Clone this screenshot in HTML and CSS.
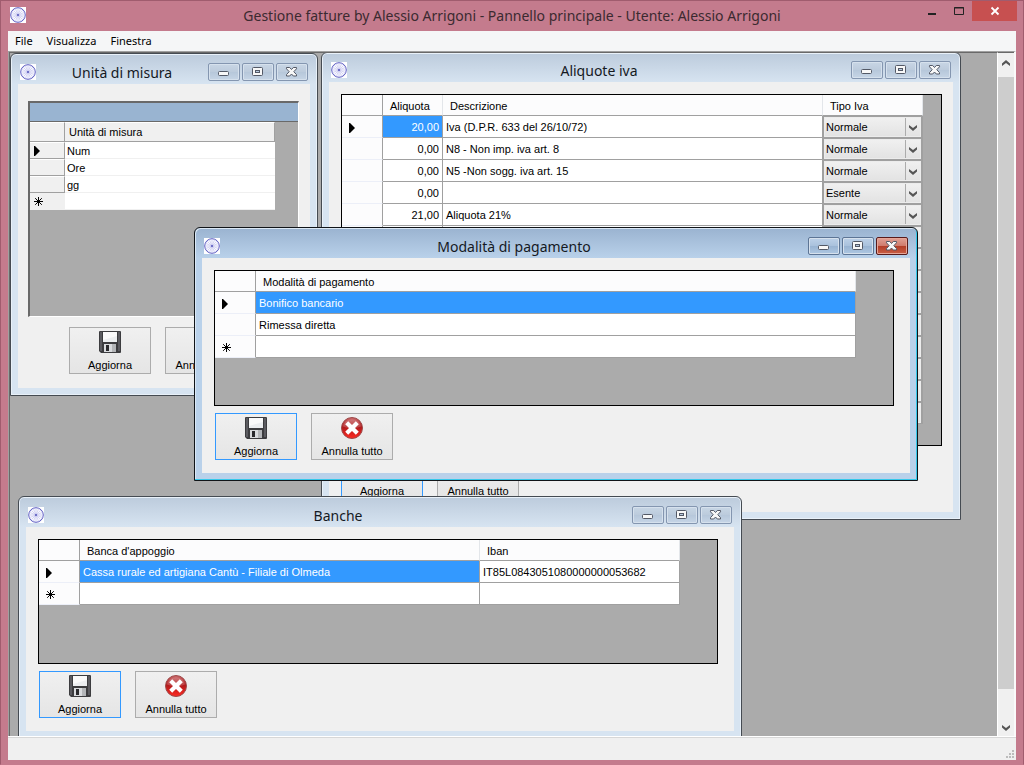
FILE: index.html
```html
<!DOCTYPE html>
<html lang="it">
<head>
<meta charset="utf-8">
<title>Gestione fatture by Alessio Arrigoni</title>
<link rel="stylesheet" href="styles.css">
</head>
<body>
<svg class="symbols" aria-hidden="true">
  <symbol id="wheel" viewBox="0 0 16 16">
    <rect width="16" height="16" fill="#fff"/>
    <circle cx="8" cy="8" r="7.300" fill="#f8f8ff" stroke="#5c5cc2" stroke-width="1"/>
    <path d="M8 1v14M1 8h14M3.100 3.100l9.800 9.800M12.900 3.100l-9.800 9.800M5.500 2l5 12M10.500 2l-5 12M2 5.500l12 5M14 5.500l-12 5" stroke="#b4b4e6" stroke-width=".5"/>
    <circle cx="8" cy="8" r="2" fill="#cfcff2"/>
    <circle cx="8" cy="8" r="1" fill="#5050b8"/>
  </symbol>
  <symbol id="minimize" viewBox="0 0 32 18">
    <rect x="10.500" y="8.500" width="10" height="4" rx="1" fill="#f8f8f8" stroke="#535966"/>
  </symbol>
  <symbol id="maximize" viewBox="0 0 32 18">
    <rect x="10.500" y="4.500" width="10" height="8" rx="1" fill="#f8f8f8" stroke="#535966"/>
    <rect x="13.500" y="7.500" width="4" height="2" fill="#b9cbe0" stroke="#535966"/>
  </symbol>
  <symbol id="close" viewBox="0 0 32 18">
    <path d="M10.500 4.500h3.200l1.800 2 1.800-2h3.200v1.300L17.800 8.700l2.700 2.900v1.400h-3.200l-1.800-2-1.800 2h-3.200v-1.400l2.700-2.900-2.700-2.900z" fill="#f8f8f8" stroke="#535966"/>
  </symbol>
  <symbol id="floppy" viewBox="0 0 22 22">
    <path d="M0 1q0-1 1-1h20q1 0 1 1v20q0 1-1 1H2l-2-2z" fill="#3c3c3f"/>
    <path d="M1 1h2v19H1zM19 1h2v19h-2z" fill="#5b5b60"/>
    <rect x="4" y="1" width="14" height="10" fill="#eceef0"/>
    <path d="M4 1h14v4L4 9z" fill="#fafafa"/>
    <rect x="5" y="13" width="12" height="8" fill="#d9dbde"/>
    <rect x="7" y="14" width="3" height="6" fill="#29292c"/>
    <path d="M13 13h4v8h-4z" fill="#b4b6b9"/>
  </symbol>
  <symbol id="cancel" viewBox="0 0 22 22">
    <circle cx="11" cy="11" r="10.500" fill="url(#red)" stroke="#9c4a4a"/>
    <path d="M2 9.500a9.200 9.200 0 0 1 18 0q-9 4-18 0z" fill="#fff" opacity=".18"/>
    <path d="M7.200 4.200L11 8l3.800-3.800 3 3L14 11l3.800 3.800-3 3L11 14l-3.800 3.800-3-3L8 11 4.200 7.200z" fill="#fff"/>
  </symbol>
  <symbol id="arrow" viewBox="0 0 6 10"><path d="M0 0h1l5 5-5 5H0z"/></symbol>
  <symbol id="star" viewBox="0 0 9 9">
    <path d="M4.500 0v9M0 4.500h9M1.200 1.200l6.600 6.600M7.800 1.200L1.200 7.800" stroke="#000" fill="none"/>
  </symbol>
  <symbol id="chevron" viewBox="0 0 8 6"><path d="M0 0l4 3L8 0v2.500L4 6 0 2.500z" fill="#555"/></symbol>
  <linearGradient id="red" x1="0" y1="0" x2="0" y2="1">
    <stop offset="0" stop-color="#c8686a"/><stop offset=".45" stop-color="#b01a1c"/><stop offset="1" stop-color="#ff2a22"/>
  </linearGradient>
</svg>

<div class="app">
  <header class="app-title">
    <svg class="app-icon"><use href="#wheel"/></svg>
    <h1 class="app-name">Gestione fatture by Alessio Arrigoni - Pannello principale - Utente: Alessio Arrigoni</h1>
    <div class="app-controls">
      <button class="app-btn" aria-label="Riduci a icona"><svg viewBox="0 0 10 10"><path d="M1 7h8v2H1z" fill="#222"/></svg></button>
      <button class="app-btn" aria-label="Ingrandisci"><svg viewBox="0 0 10 10"><path d="M.5 1.500h9v7h-9zM0 2h10" fill="none" stroke="#222"/></svg></button>
      <button class="app-btn app-close" aria-label="Chiudi"><svg viewBox="0 0 10 10"><path d="M1.500 1.500l7 7M8.500 1.500l-7 7" stroke="#fff" stroke-width="1.800"/></svg></button>
    </div>
  </header>

  <div class="app-body">
    <nav class="menu">
      <button class="menu-item">File</button>
      <button class="menu-item">Visualizza</button>
      <button class="menu-item">Finestra</button>
    </nav>

    <div class="workspace">
      <main class="desktop">

        <section class="window win-units">
          <header class="titlebar">
            <svg class="win-icon"><use href="#wheel"/></svg>
            <h2 class="win-name">Unità di misura</h2>
            <button class="win-btn" aria-label="Riduci a icona"><svg><use href="#minimize"/></svg></button>
            <button class="win-btn" aria-label="Ingrandisci"><svg><use href="#maximize"/></svg></button>
            <button class="win-btn" aria-label="Chiudi"><svg><use href="#close"/></svg></button>
          </header>
          <div class="client">
            <div class="classic">
              <div class="classic-caption"></div>
              <table class="classic-table">
                <colgroup><col class="c-mark-classic"><col class="c-unit"></colgroup>
                <thead><tr><th></th><th>Unità di misura</th></tr></thead>
                <tbody>
                  <tr><th><svg class="mark-arrow"><use href="#arrow"/></svg></th><td>Num</td></tr>
                  <tr><th></th><td>Ore</td></tr>
                  <tr><th></th><td>gg</td></tr>
                  <tr><th class="flat"><svg class="mark-star"><use href="#star"/></svg></th><td></td></tr>
                </tbody>
              </table>
            </div>
            <div class="actions actions-inset">
              <button class="action"><svg><use href="#floppy"/></svg>Aggiorna</button>
              <button class="action"><svg><use href="#cancel"/></svg>Annulla tutto</button>
            </div>
          </div>
        </section>

        <section class="window win-vat">
          <header class="titlebar">
            <svg class="win-icon"><use href="#wheel"/></svg>
            <h2 class="win-name">Aliquote iva</h2>
            <button class="win-btn" aria-label="Riduci a icona"><svg><use href="#minimize"/></svg></button>
            <button class="win-btn" aria-label="Ingrandisci"><svg><use href="#maximize"/></svg></button>
            <button class="win-btn" aria-label="Chiudi"><svg><use href="#close"/></svg></button>
          </header>
          <div class="client">
            <div class="grid">
              <table class="grid-table">
                <colgroup><col class="c-mark"><col class="c-rate"><col class="c-desc"><col class="c-type"></colgroup>
                <thead><tr><th></th><th>Aliquota</th><th>Descrizione</th><th>Tipo Iva</th></tr></thead>
                <tbody>
                  <tr><th><svg class="mark-arrow"><use href="#arrow"/></svg></th><td class="num selected">20,00</td><td>Iva (D.P.R. 633 del 26/10/72)</td><td class="combo"><select aria-label="Tipo Iva"><option>Normale</option></select><svg><use href="#chevron"/></svg></td></tr>
                  <tr><th></th><td class="num">0,00</td><td>N8 - Non imp. iva art. 8</td><td class="combo"><select aria-label="Tipo Iva"><option>Normale</option></select><svg><use href="#chevron"/></svg></td></tr>
                  <tr><th></th><td class="num">0,00</td><td>N5 -Non sogg. iva art. 15</td><td class="combo"><select aria-label="Tipo Iva"><option>Normale</option></select><svg><use href="#chevron"/></svg></td></tr>
                  <tr><th></th><td class="num">0,00</td><td></td><td class="combo"><select aria-label="Tipo Iva"><option>Esente</option></select><svg><use href="#chevron"/></svg></td></tr>
                  <tr><th></th><td class="num">21,00</td><td>Aliquota 21%</td><td class="combo"><select aria-label="Tipo Iva"><option>Normale</option></select><svg><use href="#chevron"/></svg></td></tr>
                  <tr><th></th><td></td><td></td><td class="combo"><select aria-label="Tipo Iva"></select></td></tr>
                  <tr><th></th><td></td><td></td><td class="combo"><select aria-label="Tipo Iva"></select></td></tr>
                  <tr><th></th><td></td><td></td><td class="combo"><select aria-label="Tipo Iva"></select></td></tr>
                  <tr><th></th><td></td><td></td><td class="combo"><select aria-label="Tipo Iva"></select></td></tr>
                  <tr><th></th><td></td><td></td><td class="combo"><select aria-label="Tipo Iva"></select></td></tr>
                  <tr><th></th><td></td><td></td><td class="combo"><select aria-label="Tipo Iva"></select></td></tr>
                  <tr><th></th><td></td><td></td><td class="combo"><select aria-label="Tipo Iva"></select></td></tr>
                  <tr><th></th><td></td><td></td><td class="combo"><select aria-label="Tipo Iva"></select></td></tr>
                  <tr><th></th><td></td><td></td><td class="combo"><select aria-label="Tipo Iva"></select></td></tr>
                </tbody>
              </table>
            </div>
            <div class="actions">
              <button class="action default"><svg><use href="#floppy"/></svg>Aggiorna</button>
              <button class="action"><svg><use href="#cancel"/></svg>Annulla tutto</button>
            </div>
          </div>
        </section>

        <section class="window active win-payment">
          <header class="titlebar">
            <svg class="win-icon"><use href="#wheel"/></svg>
            <h2 class="win-name">Modalità di pagamento</h2>
            <button class="win-btn" aria-label="Riduci a icona"><svg><use href="#minimize"/></svg></button>
            <button class="win-btn" aria-label="Ingrandisci"><svg><use href="#maximize"/></svg></button>
            <button class="win-btn win-close" aria-label="Chiudi"><svg><use href="#close"/></svg></button>
          </header>
          <div class="client">
            <div class="grid">
              <table class="grid-table">
                <colgroup><col class="c-mark"><col class="c-payment"></colgroup>
                <thead><tr><th></th><th>Modalità di pagamento</th></tr></thead>
                <tbody>
                  <tr><th><svg class="mark-arrow"><use href="#arrow"/></svg></th><td class="selected">Bonifico bancario</td></tr>
                  <tr><th></th><td>Rimessa diretta</td></tr>
                  <tr><th><svg class="mark-star"><use href="#star"/></svg></th><td></td></tr>
                </tbody>
              </table>
            </div>
            <div class="actions">
              <button class="action default"><svg><use href="#floppy"/></svg>Aggiorna</button>
              <button class="action"><svg><use href="#cancel"/></svg>Annulla tutto</button>
            </div>
          </div>
        </section>

        <section class="window win-banks">
          <header class="titlebar">
            <svg class="win-icon"><use href="#wheel"/></svg>
            <h2 class="win-name">Banche</h2>
            <button class="win-btn" aria-label="Riduci a icona"><svg><use href="#minimize"/></svg></button>
            <button class="win-btn" aria-label="Ingrandisci"><svg><use href="#maximize"/></svg></button>
            <button class="win-btn" aria-label="Chiudi"><svg><use href="#close"/></svg></button>
          </header>
          <div class="client">
            <div class="grid">
              <table class="grid-table">
                <colgroup><col class="c-mark"><col class="c-bank"><col class="c-iban"></colgroup>
                <thead><tr><th></th><th>Banca d'appoggio</th><th>Iban</th></tr></thead>
                <tbody>
                  <tr><th><svg class="mark-arrow"><use href="#arrow"/></svg></th><td class="selected">Cassa rurale ed artigiana Cantù - Filiale di Olmeda</td><td>IT85L0843051080000000053682</td></tr>
                  <tr><th><svg class="mark-star"><use href="#star"/></svg></th><td></td><td></td></tr>
                </tbody>
              </table>
            </div>
            <div class="actions">
              <button class="action default"><svg><use href="#floppy"/></svg>Aggiorna</button>
              <button class="action"><svg><use href="#cancel"/></svg>Annulla tutto</button>
            </div>
          </div>
        </section>

      </main>
      <div class="scrollbar">
        <button class="scroll-btn" aria-label="Scorri su"><svg class="up"><use href="#chevron"/></svg></button>
        <div class="scroll-thumb"></div>
        <button class="scroll-btn scroll-down" aria-label="Scorri giù"><svg><use href="#chevron"/></svg></button>
      </div>
    </div>

    <footer class="status">
      <svg class="grip" viewBox="0 0 8 8"><path d="M6 0h2v2H6zM3 3h2v2H3zM6 3h2v2H6zM0 6h2v2H0zM3 6h2v2H3zM6 6h2v2H6z" fill="#bcbcbc"/></svg>
    </footer>
  </div>
</div>
</body>
</html>
```
FILE: styles.css
```css
* {
  box-sizing: border-box;
}

body {
  margin: 0;
  font-family: "Liberation Sans", Arial, sans-serif;
  font-size: 11px;
  color: #000;
}

button,
select {
  font: inherit;
  color: inherit;
  margin: 0;
  padding: 0;
}

svg {
  display: block;
}

.symbols {
  position: absolute;
  width: 0;
  height: 0;
}

/* main window */
.app {
  display: flex;
  flex-direction: column;
  height: 100vh;
  padding: 0 7px 4px;
  background: #c47b8d;
  border: 1px solid #a05c6e;
  border-bottom-color: #c47b8d;
}

.app-title {
  display: flex;
  align-items: center;
  height: 30px;
  flex: none;
  padding: 0 0 2px 2px;
}

.app-icon,
.win-icon {
  width: 16px;
  height: 16px;
  flex: none;
}

.app-name {
  flex: 1;
  margin: 0;
  padding: 2px 0 0 80px;
  text-align: center;
  white-space: nowrap;
  font: 14px/20px "Noto Sans", "Open Sans", sans-serif;
  color: #3b2a30;
}

.app-controls {
  display: flex;
  align-self: flex-start;
  margin-right: -1px;
}

.app-btn {
  display: flex;
  align-items: center;
  justify-content: center;
  width: 27px;
  height: 20px;
  border: 0;
  background: none;
}

.app-btn svg {
  width: 10px;
  height: 10px;
}

.app-close {
  width: 45px;
  background: #c75050;
}

.app-body {
  display: flex;
  flex-direction: column;
  flex: 1;
  min-height: 0;
  background: #f0f0f0;
}

.menu {
  display: flex;
  align-items: flex-start;
  height: 20px;
  flex: none;
  gap: 14px;
  padding-left: 7px;
  background: #f5f6f7;
}

.menu-item {
  border: 0;
  background: none;
  font: 11px/19px "Noto Sans", "Open Sans", sans-serif;
}

.workspace {
  display: flex;
  flex: 1;
  min-height: 0;
  border: solid;
  border-width: 1px 2px 0 1px;
  border-color: #a0a0a0 #fafafa #fff #a0a0a0;
}

.desktop {
  position: relative;
  flex: 1;
  overflow: hidden;
  background: #ababab;
  border: solid #696969;
  border-width: 1px 0 0 1px;
}

.scrollbar {
  display: flex;
  flex-direction: column;
  width: 17px;
  background: #f0f0f0;
  border-left: 1px solid #fff;
  border-top: 1px solid #696969;
}

.scroll-btn {
  display: flex;
  align-items: center;
  justify-content: center;
  height: 24px;
  padding-bottom: 5px;
  border: 0;
  background: none;
}

.scroll-btn svg {
  width: 8px;
  height: 6px;
}

.scroll-down {
  height: 47px;
  align-items: flex-end;
}

.up {
  rotate: 180deg;
}

.scroll-thumb {
  flex: 1;
  background: #cdcdcd;
}

.status {
  display: flex;
  justify-content: flex-end;
  align-items: flex-end;
  height: 24px;
  flex: none;
  padding: 2px;
  border-top: 1px solid #fff;
  box-shadow: inset 0 1px #d7d7d7;
}

.grip {
  width: 8px;
  height: 8px;
}

/* child windows */
.window {
  position: absolute;
  display: flex;
  flex-direction: column;
  padding: 0 7px 7px;
  border: 1px solid #454b52;
  border-radius: 6px 6px 0 0;
  background: linear-gradient(#bccbdc, #d7e4f1 30px);
  box-shadow: inset 0 0 0 1px #e9f1f9;
}

.window.active {
  border-color: #101418;
  background: linear-gradient(#9ab3d0, #b9d1ea 30px);
  box-shadow: inset -1px -1px #35c8ea, inset 1px 1px #dbe8f5;
}

.win-units {
  left: 0;
  top: 0;
  width: 308px;
  height: 343px;
}

.win-vat {
  left: 311px;
  top: -1px;
  width: 640px;
  height: 468px;
}

.win-payment {
  left: 184px;
  top: 174px;
  width: 724px;
  height: 254px;
}

.win-banks {
  left: 8px;
  top: 443px;
  width: 724px;
  height: 243px;
}

.titlebar {
  display: flex;
  align-items: center;
  flex: none;
  gap: 2px;
  height: 30px;
  padding: 9px 2px 1px;
}

.win-vat .titlebar {
  height: 29px;
  padding: 8px 2px 1px;
}

.titlebar .win-icon {
  align-self: flex-start;
  margin-top: 1px;
}

.win-name {
  flex: 1;
  margin: 0;
  text-align: center;
  font: 14px/20px "Noto Sans", "Open Sans", sans-serif;
  color: #15191f;
}

.win-btn {
  width: 32px;
  height: 18px;
  align-self: flex-start;
  border: 1px solid #8496b0;
  border-radius: 2px;
  background: linear-gradient(#c8d6e5, #bccbdc 50%, #b6c7da 50%, #c6d5e6);
  box-shadow: inset 0 0 0 1px #d6e1ed;
}

.win-btn svg {
  width: 32px;
  height: 18px;
  margin: -1px;
}

.active .win-btn {
  border-color: #5d7595;
  background: linear-gradient(#bdd1e8, #a9c1dc 50%, #98b3d2 50%, #aec7e2);
}

.active .win-close {
  border-color: #581b1b;
  background: linear-gradient(#e0a196, #cf7a6b 50%, #b23c27 50%, #c95f45);
  box-shadow: inset 0 0 0 1px #e6a597;
}

.client {
  display: flex;
  flex-direction: column;
  flex: 1;
  gap: 7px;
  padding: 12px 16px 13px 12px;
  background: #f0f0f0;
}

/* data grids */
.grid {
  flex: 1;
  overflow: hidden;
  border: 1px solid #000;
  background: #ababab;
}

.win-vat .client {
  padding: 12px 11px 12px 12px;
}

table {
  table-layout: fixed;
  border-collapse: separate;
  border-spacing: 0;
  width: 0;
}

th,
td {
  padding: 0 3px;
  text-align: left;
  font-weight: normal;
  white-space: nowrap;
  line-height: 14px;
}

.grid-table th,
.grid-table td {
  height: 22px;
  border: solid #a0a0a0;
  border-width: 0 1px 1px 0;
  background: #fff;
}

.grid-table td {
  padding-top: 1px;
}

.grid-table thead th {
  height: 21px;
  padding: 2px 7px 0;
  border-right-color: #e3e6ea;
  background: #fcfcfd;
}

.grid-table th:first-child {
  padding-top: 2px;
  padding-left: 7px;
  border-right-color: #a0a0a0;
  border-bottom-color: #eceff8;
  background: #fcfcfd;
}

.grid-table thead th:first-child {
  border-bottom-color: #a0a0a0;
}

.grid-table .selected {
  background: #3399ff;
  color: #fff;
}

.num {
  text-align: right;
}

.c-mark { width: 41px; }
.c-rate { width: 60px; }
.c-desc { width: 380px; }
.c-type { width: 100px; }
.c-payment { width: 600px; }
.c-bank { width: 400px; }
.c-iban { width: 200px; }
.c-mark-classic { width: 35px; }
.c-unit { width: 210px; }

.mark-arrow {
  width: 6px;
  height: 10px;
}

.mark-star {
  width: 9px;
  height: 9px;
}

.grid-table .combo {
  position: relative;
  padding: 1px 0 0 1px;
  border-right-width: 2px;
  background: #a0a0a0;
}

.combo select {
  display: block;
  width: 97px;
  height: 20px;
  padding: 0 1px;
  appearance: none;
  border: 1px solid #ececec;
  border-radius: 0;
  background: linear-gradient(90deg, transparent 80px, #acacac 80px, #acacac 81px, transparent 81px), linear-gradient(#f0f0f0, #e3e3e3);
}

.combo svg {
  position: absolute;
  right: 4px;
  top: 9px;
  width: 8px;
  height: 6px;
  pointer-events: none;
}

/* classic grid */
.win-units .client {
  padding: 17px 11px 14px 10px;
  gap: 10px;
}

.classic {
  flex: 1;
  border: solid;
  border-width: 2px 1px 1px 2px;
  border-color: #696969 #fff #fff #696969;
  background: #ababab;
}

.classic-caption {
  height: 19px;
  background: #99b4d1;
  border-bottom: 1px solid #696969;
}

.classic th {
  height: 17px;
  padding-left: 4px;
  border: solid;
  border-width: 1px 1px 1px 0;
  border-color: #fff #a0a0a0 #a0a0a0;
  background: #f0f0f0;
}

.classic thead th {
  height: 20px;
}

.classic .flat {
  border-color: #f0f0f0;
}

.classic td {
  padding: 1px 2px 0;
  background: #fff;
  border-bottom: 1px solid #f0f0f0;
}

/* form buttons */
.actions {
  display: flex;
  gap: 14px;
  padding-left: 1px;
}

.win-vat .actions {
  padding-left: 0;
}

.actions-inset {
  padding-left: 41px;
}

.action {
  display: flex;
  flex-direction: column;
  align-items: center;
  gap: 5px;
  width: 82px;
  height: 47px;
  padding-top: 3px;
  border: 1px solid #acacac;
  background: linear-gradient(#f0f0f0, #e5e5e5);
  line-height: 14px;
  white-space: nowrap;
}

.action svg {
  flex: none;
  width: 22px;
  height: 22px;
}

.action.default {
  border-color: #3399ff;
}
```
